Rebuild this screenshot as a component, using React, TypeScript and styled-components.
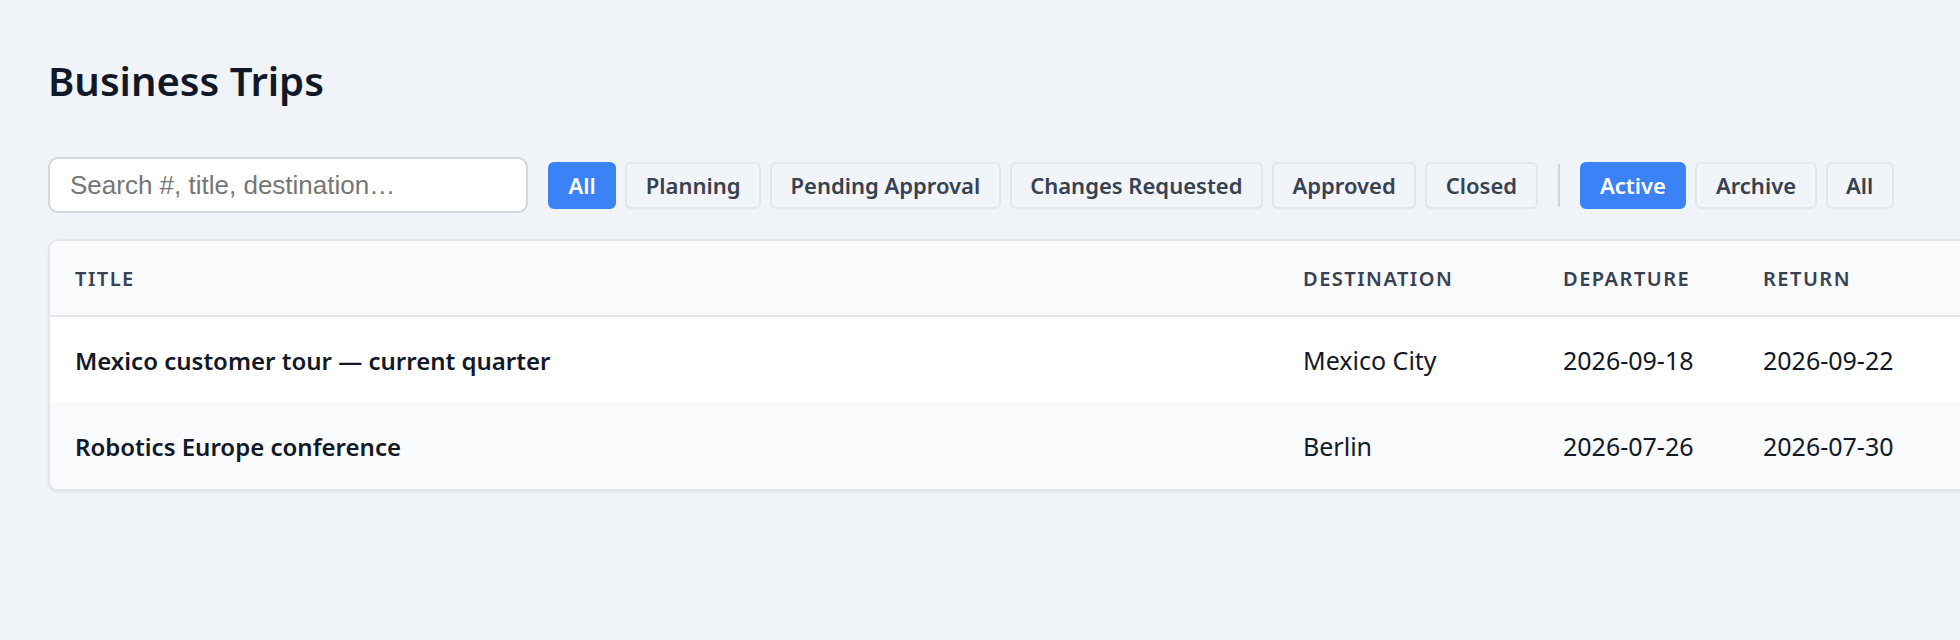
import { useState } from 'react';
import styled, { createGlobalStyle } from 'styled-components';

const GlobalStyle = createGlobalStyle`
  html, body { margin: 0; padding: 0; overflow: hidden; }
  body {
    background: #f0f3f8;
    font-family: "Segoe UI", "Noto Sans", sans-serif;
    color: #111827;
  }
`;

const Page = styled.div`
  padding: 57px 48px 40px;
`;

const Heading = styled.h1`
  margin: 0 0 52px;
  font-size: 40px; font-weight: 600; line-height: 1.2;
  color: #111827;
`;

const Toolbar = styled.div`
  display: flex; align-items: center; gap: 9px;
  margin-bottom: 26px;
`;

const Search = styled.input`
  width: 480px; height: 56px; box-sizing: border-box;
  padding: 0 20px; margin-right: 11px;
  border: 2px solid #d4d7dd; border-radius: 10px;
  background: #fff; outline: none;
  font-family: "Liberation Sans", Arial, sans-serif; font-size: 26px; color: #111827;
  &::placeholder { color: #767676; }
`;

const Chip = styled.button<{ $active?: boolean }>`
  height: 47px; box-sizing: border-box;
  padding: 0 18.5px;
  border-radius: 6px;
  border: 2px solid ${p => p.$active ? '#3b82f6' : '#e3e6eb'};
  background: ${p => p.$active ? '#3b82f6' : '#f1f4f8'};
  color: ${p => p.$active ? '#fff' : '#374151'};
  font-family: inherit; font-size: 22px; font-weight: 600;
  cursor: pointer; white-space: nowrap;
`;

const Divider = styled.div`
  width: 2px; height: 43px; background: #d1d5db;
  margin: 0 11px;
`;

const Card = styled.div`
  width: 2120px;
  background: #fff;
  border: 2px solid #e3e6eb;
  border-radius: 10px;
  box-shadow: 0 1px 3px rgba(0, 0, 0, 0.07);
  overflow: hidden;
`;

const Table = styled.table`
  width: 100%; border-collapse: collapse; table-layout: fixed;
`;

const Th = styled.th`
  height: 74px; padding: 0 25px;
  text-align: left; background: #f8fafc;
  border-bottom: 2px solid #e3e6eb;
  font-size: 20px; font-weight: 600; letter-spacing: 1.5px;
  text-transform: uppercase; color: #374151;
`;

const Row = styled.tr<{ $even?: boolean }>`
  background: ${p => p.$even ? '#f8fafc' : '#fff'};
  & + & td { border-top: 1px solid #eef0f4; }
`;

const Td = styled.td<{ $strong?: boolean }>`
  height: 86px; padding: 0 25px;
  font-size: ${p => p.$strong ? 24 : 25}px; font-weight: ${p => p.$strong ? 600 : 400};
  color: #111827; white-space: nowrap;
`;

const STATUS_FILTERS = ['All', 'Planning', 'Pending Approval', 'Changes Requested', 'Approved', 'Closed'];
const SCOPE_FILTERS = ['Active', 'Archive', 'All'];

const trips = [
  { id: 1, title: 'Mexico customer tour — current quarter', destination: 'Mexico City', departure: '2026-09-18', ret: '2026-09-22' },
  { id: 2, title: 'Robotics Europe conference', destination: 'Berlin', departure: '2026-07-26', ret: '2026-07-30' },
];

export default function App() {
  const [status, setStatus] = useState('All');
  const [scope, setScope] = useState('Active');
  const [query, setQuery] = useState('');

  return (
    <Page>
      <GlobalStyle />
      <Heading>Business Trips</Heading>
      <Toolbar>
        <Search
          placeholder="Search #, title, destination…"
          value={query} onChange={e => setQuery(e.target.value)}
        />
        {STATUS_FILTERS.map(s => (
          <Chip key={s} $active={status === s} onClick={() => setStatus(s)}>{s}</Chip>
        ))}
        <Divider />
        {SCOPE_FILTERS.map(s => (
          <Chip key={s} $active={scope === s} onClick={() => setScope(s)}>{s}</Chip>
        ))}
      </Toolbar>
      <Card>
        <Table>
          <colgroup>
            <col style={{ width: 1228 }} />
            <col style={{ width: 260 }} />
            <col style={{ width: 200 }} />
            <col />
          </colgroup>
          <thead>
            <tr>
              <Th>Title</Th>
              <Th>Destination</Th>
              <Th>Departure</Th>
              <Th>Return</Th>
            </tr>
          </thead>
          <tbody>
            {trips.map((t, i) => (
              <Row key={t.id} $even={i % 2 === 1}>
                <Td $strong>{t.title}</Td>
                <Td>{t.destination}</Td>
                <Td>{t.departure}</Td>
                <Td>{t.ret}</Td>
              </Row>
            ))}
          </tbody>
        </Table>
      </Card>
    </Page>
  );
}
